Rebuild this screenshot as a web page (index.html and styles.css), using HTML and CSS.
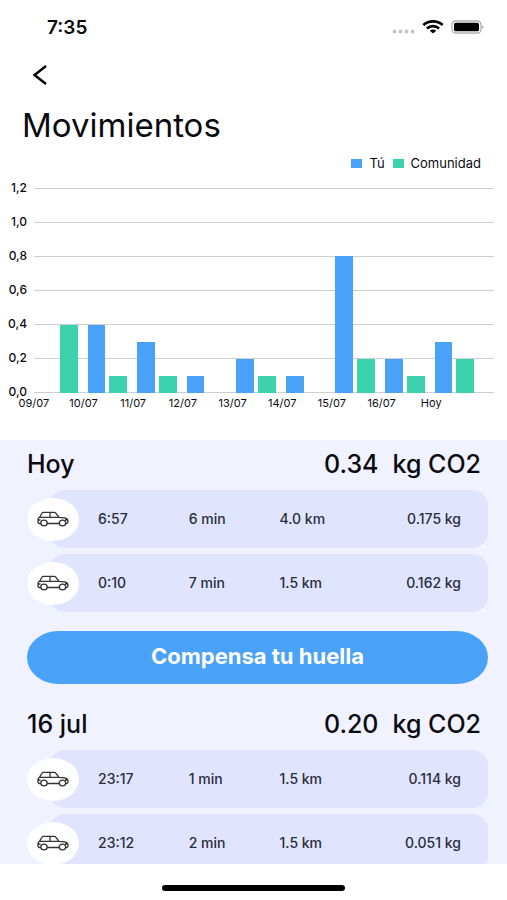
FILE: index.html
```
<!DOCTYPE html>
<html lang="es">
<head>
    <meta charset="UTF-8">
    <meta name="viewport" content="width=device-width, initial-scale=1.0">
    <title>Movimientos</title>
    <link rel="stylesheet" href="styles.css">
</head>
<body>
    <svg class="sprite" aria-hidden="true">
        <symbol id="car" viewBox="0 0 32 16">
            <path d="M4 12.500H2.400C1.600 12.500 1 11.800 1 11V8.600C1 7.400 1.600 6.600 2.600 6.200L4.900 2.300C5.200 1.700 5.700 1.400 6.400 1.400H17C17.800 1.400 18.500 1.700 19 2.300L22 6.400L27.500 6.900C29.600 7.300 31 8.500 31 10.200V11C31 11.900 30.300 12.500 29.500 12.500H28.500M10 12.500H22.500M2.600 6.400H22M13 1.400V6.400M1 9H3.500M28 9H31"/>
            <ellipse cx="7" cy="12" rx="3.200" ry="2.900"/>
            <ellipse cx="25.500" cy="12" rx="3.200" ry="2.900"/>
        </symbol>
    </svg>

    <header class="status-bar">
        <span class="clock">7:35</span>
        <div class="status-icons">
            <svg width="23" height="5" viewBox="0 0 23 5" fill="#c4c4c4">
                <circle cx="2.500" cy="2.500" r="1.900"/>
                <circle cx="8.500" cy="2.500" r="1.900"/>
                <circle cx="14.500" cy="2.500" r="1.900"/>
                <circle cx="20.500" cy="2.500" r="1.900"/>
            </svg>
            <svg class="wifi" width="22" height="14" viewBox="0 0 22 14" fill="none" stroke="#000" stroke-width="2.600">
                <path d="M1.300 5C6.800 0.200 15.200 0.200 20.700 5"/>
                <path d="M4.900 8.400C8.500 5.300 13.500 5.300 17.100 8.400"/>
                <path d="M11 13.400L7.800 10.700C9.500 9.200 12.500 9.200 14.200 10.700Z" fill="#000" stroke="none"/>
            </svg>
            <svg width="33" height="14" viewBox="0 0 33 14">
                <rect x="1" y="1" width="29" height="12" rx="3.500" fill="#fff" stroke="#b0b0b0" stroke-width="1.300"/>
                <rect x="3" y="2.700" width="25" height="8.600" rx="1.600" fill="#000"/>
                <path d="M31.300 5.500C32.800 6 32.800 8 31.300 8.500Z" fill="#888"/>
            </svg>
        </div>
    </header>

    <section class="movements">
        <button class="back" type="button" aria-label="Volver">
            <svg width="16" height="20" viewBox="0 0 16 20" fill="none" stroke="#000" stroke-width="2.400">
                <path d="M14 1L2.500 10L14 19"/>
            </svg>
        </button>
        <h1 class="title">Movimientos</h1>

        <div class="legend">
            <span class="legend-item you">Tú</span>
            <span class="legend-item community">Comunidad</span>
        </div>

        <div class="chart">
            <div class="y-axis">
                <span>1,2</span>
                <span>1,0</span>
                <span>0,8</span>
                <span>0,6</span>
                <span>0,4</span>
                <span>0,2</span>
                <span>0,0</span>
            </div>
            <div class="plot">
                <div class="group">
                    <div class="bar you" style="height: 0%"></div>
                    <div class="bar community" style="height: 33.33%"></div>
                </div>
                <div class="group">
                    <div class="bar you" style="height: 33.33%"></div>
                    <div class="bar community" style="height: 8.33%"></div>
                </div>
                <div class="group">
                    <div class="bar you" style="height: 25%"></div>
                    <div class="bar community" style="height: 8.33%"></div>
                </div>
                <div class="group">
                    <div class="bar you" style="height: 8.33%"></div>
                    <div class="bar community" style="height: 0%"></div>
                </div>
                <div class="group">
                    <div class="bar you" style="height: 16.67%"></div>
                    <div class="bar community" style="height: 8.33%"></div>
                </div>
                <div class="group">
                    <div class="bar you" style="height: 8.33%"></div>
                    <div class="bar community" style="height: 0%"></div>
                </div>
                <div class="group">
                    <div class="bar you" style="height: 66.67%"></div>
                    <div class="bar community" style="height: 16.67%"></div>
                </div>
                <div class="group">
                    <div class="bar you" style="height: 16.67%"></div>
                    <div class="bar community" style="height: 8.33%"></div>
                </div>
                <div class="group">
                    <div class="bar you" style="height: 25%"></div>
                    <div class="bar community" style="height: 16.67%"></div>
                </div>
            </div>
        </div>
        <div class="x-axis">
            <span>09/07</span>
            <span>10/07</span>
            <span>11/07</span>
            <span>12/07</span>
            <span>13/07</span>
            <span>14/07</span>
            <span>15/07</span>
            <span>16/07</span>
            <span>Hoy</span>
        </div>
    </section>

    <main class="days">
        <section class="day">
            <h2 class="day-header"><span>Hoy</span><span class="total"><span>0.34</span><span>kg CO2</span></span></h2>
            <ul class="trips">
                <li class="trip">
                    <span class="trip-icon"><svg><use href="#car"/></svg></span>
                    <div class="trip-data"><span>6:57</span><span>6 min</span><span>4.0 km</span><span>0.175 kg</span></div>
                </li>
                <li class="trip">
                    <span class="trip-icon"><svg><use href="#car"/></svg></span>
                    <div class="trip-data"><span>0:10</span><span>7 min</span><span>1.5 km</span><span>0.162 kg</span></div>
                </li>
            </ul>
            <button class="offset" type="button">Compensa tu huella</button>
        </section>

        <section class="day">
            <h2 class="day-header"><span>16 jul</span><span class="total"><span>0.20</span><span>kg CO2</span></span></h2>
            <ul class="trips">
                <li class="trip">
                    <span class="trip-icon"><svg><use href="#car"/></svg></span>
                    <div class="trip-data"><span>23:17</span><span>1 min</span><span>1.5 km</span><span>0.114 kg</span></div>
                </li>
                <li class="trip">
                    <span class="trip-icon"><svg><use href="#car"/></svg></span>
                    <div class="trip-data"><span>23:12</span><span>2 min</span><span>1.5 km</span><span>0.051 kg</span></div>
                </li>
            </ul>
        </section>
    </main>

    <footer class="home-indicator">
        <div class="home-line"></div>
    </footer>
</body>
</html>
```
FILE: styles.css
```
* {
    box-sizing: border-box;
}

body {
    margin: 0;
    height: 100vh;
    display: flex;
    flex-direction: column;
    background: #fff;
    color: #0b0b0f;
    font-family: Inter, "Liberation Sans", sans-serif;
}

button {
    border: 0;
    padding: 0;
    font-family: inherit;
    cursor: pointer;
}

.sprite {
    display: none;
}

/* status bar */
.status-bar {
    display: flex;
    flex-shrink: 0;
    align-items: center;
    justify-content: space-between;
    height: 54px;
    padding: 0 23px 0 47px;
}

.clock {
    font-size: 19px;
    font-weight: 600;
}

.status-icons {
    display: flex;
    align-items: flex-end;
    gap: 7px;
}

/* chart */
.movements {
    flex-shrink: 0;
    padding-bottom: 27px;
}

.back {
    display: flex;
    align-items: center;
    height: 41px;
    margin-left: 32px;
    background: none;
}

.title {
    margin: 0;
    padding-left: 22px;
    font-size: 33px;
    font-weight: 400;
    line-height: 60px;
}

.legend {
    display: flex;
    justify-content: flex-end;
    gap: 8px;
    padding-right: 26px;
    font-size: 13px;
    line-height: 16px;
}

.legend-item {
    display: flex;
    align-items: center;
    gap: 7px;
}

.legend-item::before {
    content: "";
    width: 11px;
    height: 9px;
}

.you::before,
.bar.you {
    background: #49a2f8;
}

.community::before,
.bar.community {
    background: #3dd2ae;
}

.chart {
    display: flex;
    padding-right: 13px;
}

.y-axis {
    display: flex;
    flex-direction: column;
    width: 34px;
    padding-right: 7px;
    font-size: 12px;
    font-weight: 500;
    line-height: 34px;
    text-align: right;
}

.plot {
    display: flex;
    flex: 1;
    height: 205px;
    margin-top: 17px;
    padding-right: 14px;
    background: repeating-linear-gradient(#cfcfcf 0 1px, transparent 1px 34px);
}

.group {
    display: flex;
    flex: 1;
    align-items: flex-end;
    gap: 4px;
    padding: 0 6px 0 4px;
}

.bar {
    flex: 1;
}

.x-axis {
    display: flex;
    margin-top: -16px;
    padding: 0 51px 0 9px;
    font-size: 11px;
    line-height: 20px;
}

.x-axis span {
    flex: 1;
    text-align: center;
}

/* trips by day */
.days {
    flex: 1;
    min-height: 0;
    overflow: hidden;
    padding: 0 19px 0 27px;
    background: #f0f2ff;
}

.day {
    padding-bottom: 16px;
}

.day-header {
    display: flex;
    align-items: center;
    justify-content: space-between;
    margin: 0;
    height: 50px;
    padding: 0 7px 2px 0;
    font-size: 25px;
    font-weight: 500;
}

.total {
    display: flex;
    gap: 14px;
}

.trips {
    display: flex;
    flex-direction: column;
    gap: 6px;
    margin: 0;
    padding: 0;
    list-style: none;
}

.trip {
    display: flex;
    align-items: center;
}

.trip-icon {
    display: flex;
    align-items: center;
    justify-content: center;
    position: relative;
    z-index: 1;
    width: 52px;
    height: 43px;
    border-radius: 50%;
    background: #fff;
}

.trip-icon svg {
    width: 32px;
    height: 16px;
    fill: none;
    stroke: #333;
    stroke-width: 1.3;
}

.trip-icon ellipse {
    fill: #fff;
}

.trip-data {
    display: grid;
    grid-template-columns: repeat(4, 1fr);
    flex: 1;
    align-items: center;
    height: 58px;
    margin-left: -30px;
    padding: 0 27px 2px 49px;
    border-radius: 16px;
    background: #e0e4ff;
    color: #2a2c3c;
    font-size: 14px;
    font-weight: 500;
}

.trip-data span:last-child {
    text-align: right;
}

.offset {
    display: block;
    width: 100%;
    height: 53px;
    margin-top: 19px;
    padding-bottom: 3px;
    border-radius: 32px / 27px;
    background: #49a2f8;
    color: #fff;
    font-size: 22px;
    font-weight: 700;
}

.home-indicator {
    display: flex;
    flex-shrink: 0;
    align-items: center;
    justify-content: center;
    height: 36px;
    padding-top: 12px;
}

.home-line {
    width: 36%;
    height: 6px;
    border-radius: 3px;
    background: #000;
}
```
